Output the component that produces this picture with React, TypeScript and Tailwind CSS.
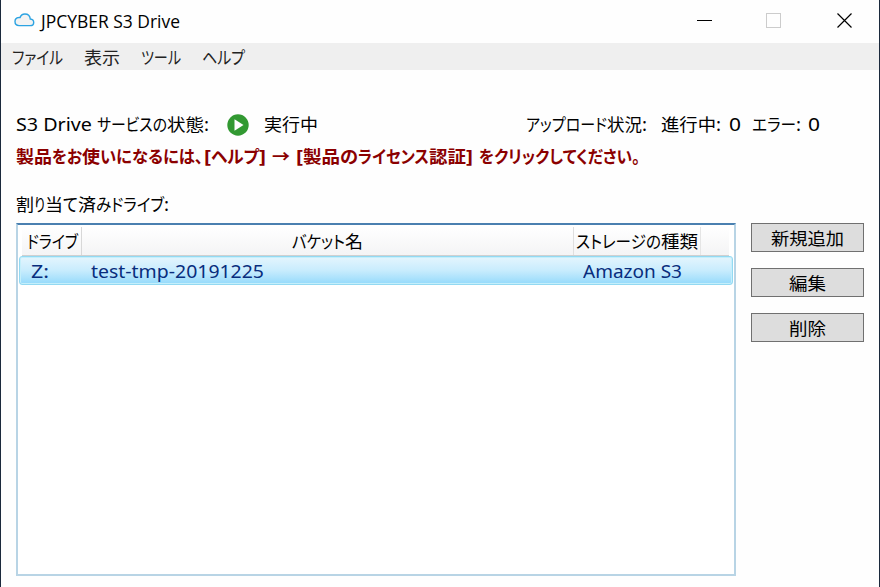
import { useLayoutEffect, useRef } from 'react'
import { clsx } from 'clsx'

type TextRun = [text: string, width: number]

const STATUS_LABEL: TextRun[] = [['S3 Drive', 76], ['\u00a0', 5], ['サービスの', 70], ['状態', 37], [':', 5]]

const UPLOAD_LABEL: TextRun[] = [['アップロード', 81], ['状況', 35], [':', 5]]

const LICENSE_NOTICE: TextRun[] = [
  ['製品', 36],
  ['をお', 30],
  ['使', 18],
  ['いになるには、', 103],
  ['\u00a0', 1],
  ['[', 7],
  ['ヘルプ', 48],
  [']', 7],
  ['\u00a0', 6],
  ['→', 18],
  ['\u00a0', 6],
  ['[', 7],
  ['製品', 37],
  ['の', 18],
  ['ライセンス', 71],
  ['認証', 37],
  [']', 7],
  ['\u00a0', 6],
  ['をクリックしてください。', 161],
]

const DRIVES_LABEL: TextRun[] = [
  ['割', 18],
  ['り', 11],
  ['当', 18],
  ['て', 15],
  ['済', 18],
  ['みドライブ', 68],
  [':', 5],
]

const MENU: TextRun[][] = [
  [['ファイル', 51]],
  [['表示', 36]],
  [['ツール', 40]],
  [['ヘルプ', 43]],
]

const ACTIONS: TextRun[] = [
  ['新規追加', 73],
  ['編集', 37],
  ['削除', 37],
]

// Condenses or widens a run of text so that it fills the given width
const Run = ({ text, width }: { text: string; width: number }) => {
  const ref = useRef<HTMLSpanElement>(null)

  useLayoutEffect(() => {
    const el = ref.current
    if (!el) return
    el.style.transform = 'none'
    const natural = el.getBoundingClientRect().width
    if (natural > 0) el.style.transform = `scaleX(${width / natural})`
  }, [text, width])

  return (
    <span className="inline-block whitespace-nowrap text-left" style={{ width }}>
      <span ref={ref} className="inline-block origin-left">
        {text}
      </span>
    </span>
  )
}

const Label = ({ runs, className }: { runs: TextRun[]; className?: string }) => (
  <span
    className={clsx(
      "flex whitespace-nowrap font-['Noto_Sans','Noto_Sans_CJK_JP',sans-serif] text-[17.5px] leading-[24px] [font-feature-settings:'palt']",
      className,
    )}
  >
    {runs.map(([text, width], i) => (
      <Run key={i} text={text} width={width} />
    ))}
  </span>
)

const CloudIcon = () => (
  <svg width="21" height="14" viewBox="0 0 21 14" fill="#f3f3f3" stroke="#2ca3e2" strokeWidth="1.4">
    <path d="M5 12.6h11.2c2.2 0 3.5-1.4 3.5-3.2 0-1.9-1.4-3.2-3.4-3.4C16 3.1 13.9 1 10.9 1 8.6 1 6.8 2.3 6.1 4.5 5.6 4.4 5.2 4.4 4.7 4.5 2.5 4.7 1 6.3 1 8.6c0 2.4 1.6 4 4 4z" />
  </svg>
)

const PlayIcon = () => (
  <svg width="22" height="22" viewBox="0 0 22 22">
    <circle cx="11" cy="11" r="10.7" fill="#329932" />
    <path d="M7.5 5.3v11.4L16.5 11z" fill="#fff" />
  </svg>
)

const TitleBar = () => (
  <header className="flex h-[43px] items-start pl-[13px]">
    <div className="pt-[13px]">
      <CloudIcon />
    </div>
    <Label
      runs={[['JPCYBER S3 Drive', 139]]}
      className="ml-[6px] mt-[9px] font-['Open_Sans',sans-serif]! text-black"
    />
    <div className="ml-auto flex pr-[26px] pt-[13px]">
      <svg width="156" height="16" viewBox="0 0 156 16" fill="none">
        <path d="M0 7.5h15" stroke="#000" />
        <rect x="69.5" y="0.5" width="14" height="14" stroke="#ccc" />
        <path d="M140.5 0.5l14 14M154.5 0.5l-14 14" stroke="#000" strokeWidth="1.2" />
      </svg>
    </div>
  </header>
)

const DriveTable = () => (
  <div className="h-[353px] w-[720px] border-2 border-[#b8d4e5] border-t-[#4a80b0] bg-white px-px">
    <div className="ml-[3px] mr-[4px] mt-[2px] flex h-[29px] border-b border-[#d0d0d0] bg-linear-to-b from-white to-[#f4f4f5] text-black">
      <div className="flex w-[60px] items-center border-r border-[#d8d8d8] pl-[5px]">
        <Label runs={[['ドライブ', 51]]} />
      </div>
      <div className="flex w-[492px] items-center justify-center border-r border-[#dfdfdf]">
        <Label runs={[['バケット', 53], ['名', 18]]} />
      </div>
      <div className="flex w-[127px] items-center border-r border-[#e5e5e5] pl-[2px]">
        <Label runs={[['ストレージの', 85], ['種類', 37]]} />
      </div>
    </div>
    <div className="flex h-[29px] w-[714px] items-center rounded-[3px] border border-[#93d9f2] bg-linear-to-b from-[#e4f5fd] via-[#c8ecfd] to-[#94dafb] text-[#082d7d] shadow-[inset_0_0_0_1px_#c5effb]">
      <Label runs={[['Z:', 18]]} className="ml-[11px] w-[60px]" />
      <Label runs={[['test-tmp-20191225', 173]]} className="w-[492px]" />
      <Label runs={[['Amazon S3', 99]]} />
    </div>
  </div>
)

export default function App() {
  return (
    <div className="h-[587px] w-[880px] overflow-hidden border-l border-r border-[#1b293c] bg-[#fefefe] text-black">
      <TitleBar />
      <nav className="flex h-[27px] items-center gap-[21px] bg-[#efefef] pl-[11px] text-[#222]">
        {MENU.map((runs) => (
          <Label key={runs[0][0]} runs={runs} />
        ))}
      </nav>

      <main className="pl-[15px] pt-[43px]">
        <div className="flex h-[23px] items-center">
          <Label runs={STATUS_LABEL} className="pb-[2px]" />
          <span className="ml-[18px]">
            <PlayIcon />
          </span>
          <Label runs={[['実行中', 54]]} className="ml-[15px] pb-[2px]" />
          <Label runs={UPLOAD_LABEL} className="ml-[208px] pb-[2px]" />
          <Label runs={[['進行中', 55], [':', 5]]} className="ml-[14px] pb-[2px]" />
          <Label runs={[['0', 12]]} className="ml-[8px] pb-[2px]" />
          <Label runs={[['エラー', 44], [':', 5]]} className="ml-[11px] pb-[2px]" />
          <Label runs={[['0', 12]]} className="ml-[7px] pb-[2px]" />
        </div>
        <Label runs={LICENSE_NOTICE} className="mt-[8px] font-bold text-[#8b0000]" />
        <Label runs={DRIVES_LABEL} className="mt-[24px]" />

        <div className="mt-[7px] flex gap-[15px]">
          <DriveTable />
          <div className="flex flex-col gap-[16px]">
            {ACTIONS.map((action) => (
              <button
                key={action[0]}
                className="flex h-[29px] w-[113px] items-center justify-center border border-[#707070] bg-[#ddd]"
              >
                <Label runs={[action]} />
              </button>
            ))}
          </div>
        </div>
      </main>
    </div>
  )
}
